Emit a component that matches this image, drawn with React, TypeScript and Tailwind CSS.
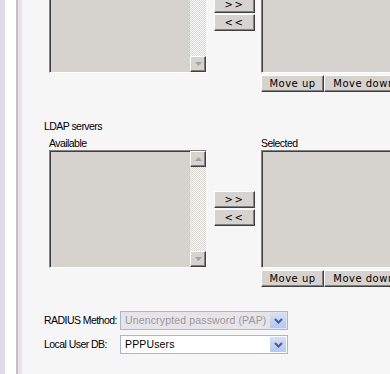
import type { ReactNode } from "react";

const label = "font-['Liberation_Sans',Arial,sans-serif] text-[10.5px] tracking-[-0.55px] leading-[13px] text-black";
const raised =
  "bg-[#d6d3ce] border border-t-white border-l-white border-b-[#404040] border-r-[#404040] shadow-[inset_-1px_-1px_0_#808080]";
const checker = "bg-[repeating-conic-gradient(#d6d3ce_0_25%,#ffffff_0_50%)] bg-[length:2px_2px]";

function Arrow({ up }: { up?: boolean }) {
  return (
    <div className={`flex h-[16px] w-[16px] items-center justify-center ${raised}`}>
      <svg width="7" height="4" viewBox="0 0 7 4">
        <path d={up ? "M0 4 L3.5 0 L7 4 Z" : "M0 0 L7 0 L3.5 4 Z"} fill="#a3a3a3" />
      </svg>
    </div>
  );
}

function ListBox({ width, scroll }: { width: number; scroll?: boolean }) {
  return (
    <div
      className="flex h-[118px] border border-t-[#808080] border-l-[#808080] border-b-white border-r-white bg-[#d6d3ce] shadow-[inset_1px_1px_0_#404040]"
      style={{ width }}
    >
      <div className="flex-1" />
      {scroll ? (
        <div className="flex w-[16px] flex-col">
          <Arrow up />
          <div className={`flex-1 ${checker}`} />
          <Arrow />
        </div>
      ) : null}
    </div>
  );
}

function Btn({ children, className = "" }: { children: ReactNode; className?: string }) {
  return (
    <div
      className={`flex h-[17px] items-center justify-center font-['DejaVu_Sans',Verdana,sans-serif] text-[10px] text-black ${raised} ${className}`}
    >
      {children}
    </div>
  );
}

// labels of the upper picker sit above the window, so they are left blank
function Caption({ text }: { text?: string }) {
  return <p className={`${label} h-[13px]`}>{text}</p>;
}

function Picker({ title, offscreen }: { title: string; offscreen?: boolean }) {
  return (
    <div className="flex flex-col">
      <Caption text={offscreen ? undefined : title} />
      <div className="ml-[5px] mt-[4px] flex items-start">
        <div className="flex flex-col">
          <Caption text={offscreen ? undefined : "Available"} />
          <ListBox width={158} scroll />
        </div>
        <div className="ml-[7px] mt-[54px] flex w-[41px] flex-col gap-[1px]">
          <Btn className="tracking-[1.5px]">&gt;&gt;</Btn>
          <Btn className="tracking-[1.5px]">&lt;&lt;</Btn>
        </div>
        <div className="ml-[6px] flex shrink-0 flex-col">
          <Caption text={offscreen ? undefined : "Selected"} />
          <ListBox width={150} />
          <div className="mt-[2px] flex">
            <Btn className="w-[63px] tracking-[0.5px]">Move up</Btn>
            <Btn className="w-[80px] tracking-[0.5px]">Move down</Btn>
          </div>
        </div>
      </div>
    </div>
  );
}

function Chevron() {
  return (
    <div className="flex w-[16px] items-center justify-center bg-gradient-to-b from-[#d3e0fb] to-[#b3c7f2]">
      <svg width="9" height="6" viewBox="0 0 9 6">
        <path d="M1 1 L4.5 4.5 L8 1" stroke="#4a5e8c" strokeWidth="2" fill="none" />
      </svg>
    </div>
  );
}

function Field({ name, value, disabled }: { name: string; value: string; disabled?: boolean }) {
  return (
    <div className="flex items-center">
      <p className={`${label} w-[76px]`}>{name}</p>
      <div
        className={`flex h-[19px] w-[168px] border border-[#a7b4d6] p-[1px] ${
          disabled ? "bg-[#e6e4e8] text-[#999999]" : "bg-white text-black"
        }`}
      >
        <span className="flex-1 overflow-hidden whitespace-nowrap pl-[3px] font-['Liberation_Sans',Arial,sans-serif] text-[10.5px] leading-[15px] tracking-[0.15px]">
          {value}
        </span>
        <Chevron />
      </div>
    </div>
  );
}

export default function App() {
  return (
    <div className="flex h-[374px] w-[390px] overflow-hidden bg-[#f6f6f6]">
      <div className="w-[5px] shrink-0 bg-[#dedae6]" />
      <div className="w-[11px] shrink-0 bg-white" />
      <div className="w-[2px] shrink-0 bg-[#c4c2c8]" />
      <div className="w-[4px] shrink-0 bg-[#e6e4ea]" />
      <div className="ml-[22px] -mt-[75px] flex flex-col">
        <Picker title="Protocols" offscreen />
        <div className="mt-[28px]">
          <Picker title="LDAP servers" />
        </div>
        <div className="mt-[24px] flex flex-col gap-[5px]">
          <Field name="RADIUS Method:" value="Unencrypted password (PAP)" disabled />
          <Field name="Local User DB:" value="PPPUsers" />
        </div>
      </div>
    </div>
  );
}
